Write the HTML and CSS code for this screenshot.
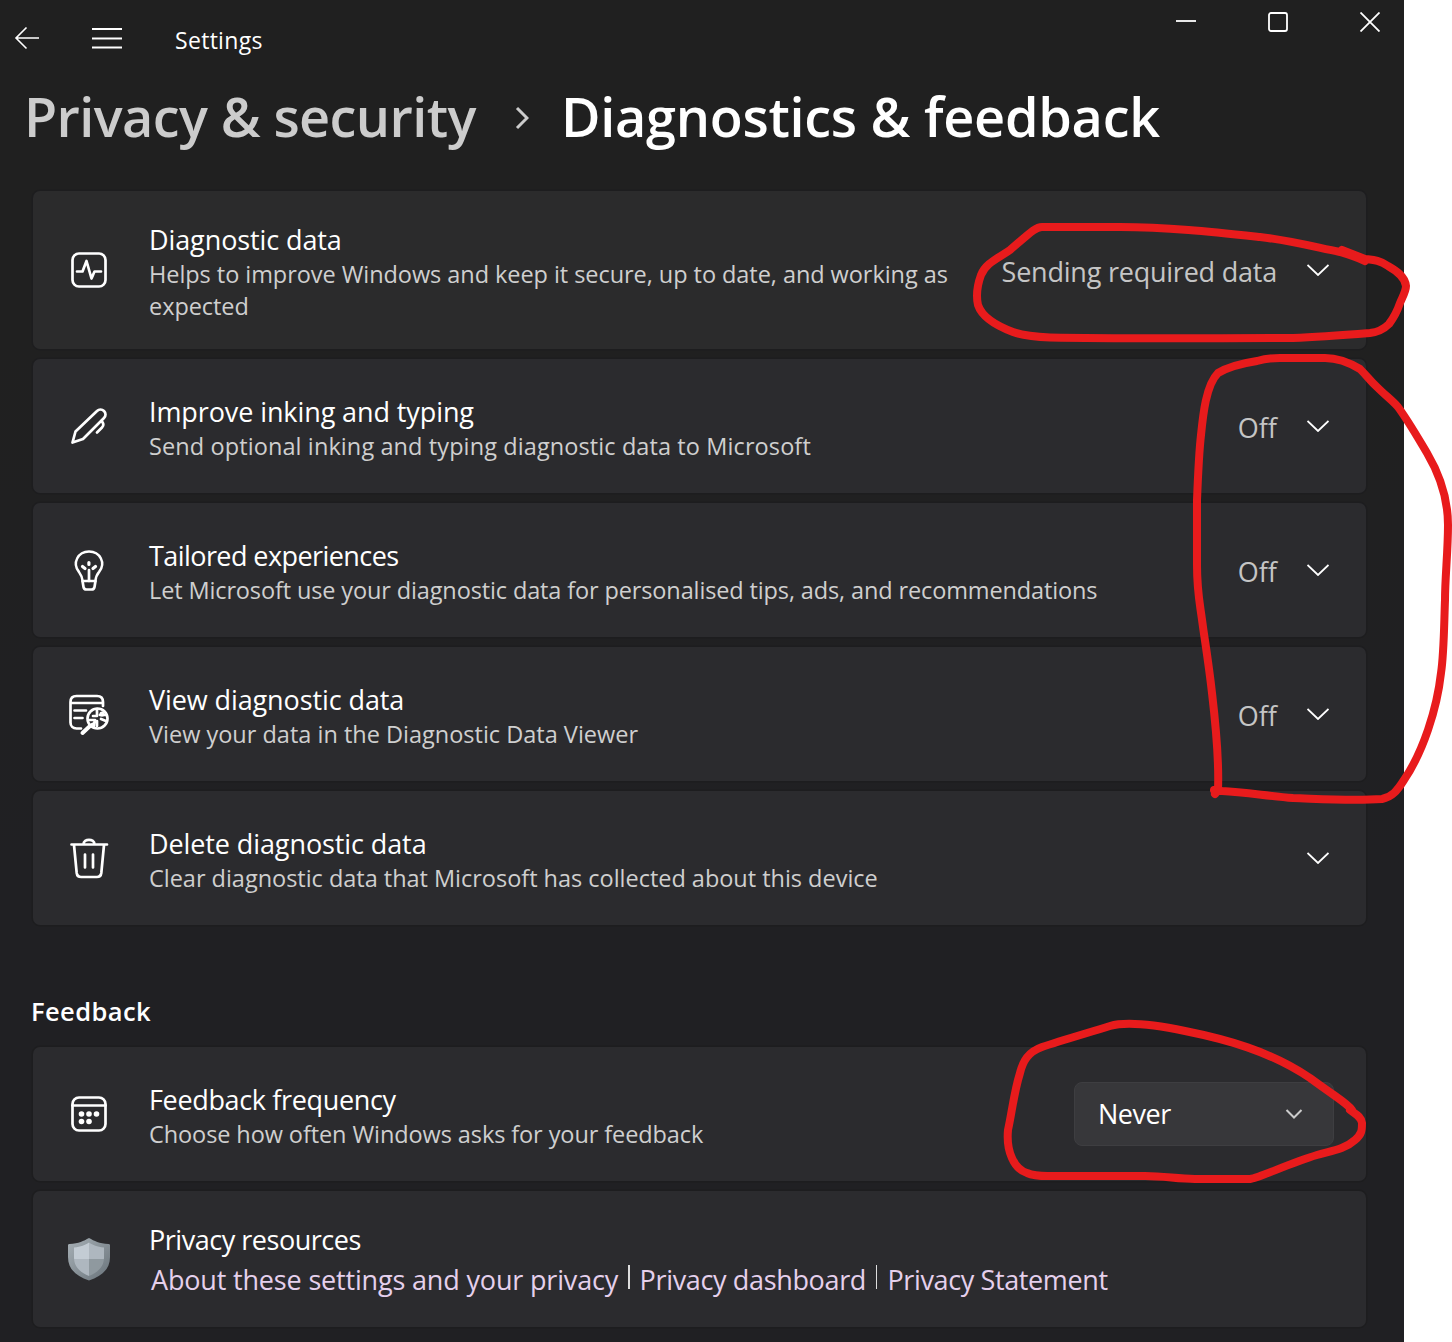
FILE: index.html
```html
<!DOCTYPE html>
<html lang="en">
<head>
<meta charset="utf-8">
<title>Settings</title>
<link rel="stylesheet" href="styles.css">
</head>
<body>
<div class="window">
  <header class="titlebar">
    <div class="nav">
      <svg class="back" width="26" height="24" viewBox="0 0 26 24"><path d="M25 12H2M12.500 1.500L2 12l10.500 10.500"/></svg>
      <svg class="menu" width="30" height="22" viewBox="0 0 30 22"><path d="M0 2h30M0 11.500h30M0 20.500h30"/></svg>
      <span class="app-name">Settings</span>
    </div>
    <div class="controls">
      <svg width="20" height="20" viewBox="0 0 20 20"><path d="M0 9h20"/></svg>
      <svg width="20" height="20" viewBox="0 0 20 20"><rect x="1" y="1" width="18" height="18" rx="2"/></svg>
      <svg width="20" height="20" viewBox="0 0 20 20"><path d="M.5.500l19 19M19.500.500l-19 19"/></svg>
    </div>
  </header>
  <h1 class="crumbs">
    <span class="parent">Privacy &amp; security</span>
    <svg width="14" height="24" viewBox="0 0 14 24"><path d="M2 2l10 10L2 22"/></svg>
    <span class="current">Diagnostics &amp; feedback</span>
  </h1>
  <main>
    <section class="cards">
      <article class="card tall">
        <svg class="icon" width="44" height="44" viewBox="0 0 44 44"><rect x="5.500" y="5.500" width="33" height="33" rx="6.500"/><path d="M10 23.500h5.500l4-10.500 5 17.500 3-7H34"/></svg>
        <div class="text"><h2>Diagnostic data</h2><p class="s1">Helps to improve Windows and keep it secure, up to date, and working as expected</p></div>
        <span class="value sending">Sending required data</span>
        <svg class="chevron" width="22" height="12" viewBox="0 0 22 12"><path d="M.5 1L11 11 21.500 1"/></svg>
      </article>
      <article class="card">
        <svg class="icon" width="44" height="44" viewBox="0 0 44 44"><path d="M5.500 38.500l3-11L30 7c2-2 5-2 7 0s2 5 0 7L16 35z"/><path d="M34.500 17c2.500 2.500 2.500 4.500.5 6.500l-5 5"/></svg>
        <div class="text"><h2 class="t2">Improve inking and typing</h2><p class="s2">Send optional inking and typing diagnostic data to Microsoft</p></div>
        <span class="value">Off</span>
        <svg class="chevron" width="22" height="12" viewBox="0 0 22 12"><path d="M.5 1L11 11 21.500 1"/></svg>
      </article>
      <article class="card">
        <svg class="icon" width="44" height="44" viewBox="0 0 44 44"><path d="M15 33c-.5-4-2-6.500-4-9-8-9-1-20.500 11-20.500S41 15 33 24c-2.500 2.500-3.500 5-4 9z" transform="translate(2 0) scale(.91 1)"/><path d="M15.500 33l1 6c.3 1.800 1 2.500 3 2.500h5c2 0 2.700-.7 3-2.500l1-6M22 22v11"/><path d="M21.900 14.500v2M15.500 18.500l2.500 2M28.500 18.500l-2.500 2" stroke-width="3.200"/></svg>
        <div class="text"><h2 class="t3">Tailored experiences</h2><p class="s3">Let Microsoft use your diagnostic data for personalised tips, ads, and recommendations</p></div>
        <span class="value">Off</span>
        <svg class="chevron" width="22" height="12" viewBox="0 0 22 12"><path d="M.5 1L11 11 21.500 1"/></svg>
      </article>
      <article class="card">
        <svg class="icon" width="44" height="44" viewBox="0 0 44 44"><path d="M14 36.500H9.500c-3.500 0-6-2.500-6-6V10c0-4 2-6 6-6H30c4 0 6 2 6 6v4M3.500 11H36M7.500 18.500H19M7.500 26h8"/><circle cx="30.500" cy="26.500" r="10"/><path d="M23 34L15.500 41" stroke-width="4"/><path d="M30 17v7h-4M22 28h6l-1 4M38 23h-5M34 27l5 2M30 29v5"/><circle cx="35" cy="22" r="1.200"/><circle cx="26" cy="33" r="1.200"/></svg>
        <div class="text"><h2 class="t4">View diagnostic data</h2><p class="s4">View your data in the Diagnostic Data Viewer</p></div>
        <span class="value">Off</span>
        <svg class="chevron" width="22" height="12" viewBox="0 0 22 12"><path d="M.5 1L11 11 21.500 1"/></svg>
      </article>
      <article class="card">
        <svg class="icon" width="44" height="44" viewBox="0 0 44 44"><path d="M4.500 8.500h35.500M16.500 8.300c0-6 11-6 11 0M7 9l2.700 28c.4 3 1.500 4 4.500 4h15.600c3 0 4.100-1 4.500-4L37 9M18 18.500v13M26 18.500v13"/></svg>
        <div class="text"><h2 class="t5">Delete diagnostic data</h2><p class="s5">Clear diagnostic data that Microsoft has collected about this device</p></div>
        <svg class="chevron" width="22" height="12" viewBox="0 0 22 12"><path d="M.5 1L11 11 21.500 1"/></svg>
      </article>
    </section>
    <h3 class="group">Feedback</h3>
    <section class="cards">
      <article class="card feedback">
        <svg class="icon" width="44" height="44" viewBox="0 0 44 44"><rect x="5.500" y="5.500" width="33" height="33" rx="6.500"/><path d="M5.500 13.500h33"/><g class="dots"><circle cx="14.500" cy="22" r="2.800"/><circle cx="22" cy="22" r="2.800"/><circle cx="29.500" cy="22" r="2.800"/><circle cx="14.500" cy="29.500" r="2.800"/><circle cx="22" cy="29.500" r="2.800"/></g></svg>
        <div class="text"><h2 class="t6">Feedback frequency</h2><p class="s6">Choose how often Windows asks for your feedback</p></div>
        <button class="select"><span>Never</span><svg width="18" height="12" viewBox="0 0 18 12"><path d="M1.500 2L9 9.500 16.500 2"/></svg></button>
      </article>
      <article class="card privacy">
        <svg class="icon shield" width="44" height="44" viewBox="0 0 44 44">
          <defs>
            <linearGradient id="rim" x1="0" y1="0" x2="1" y2="1"><stop offset="0" stop-color="#a7b0b6"/><stop offset="1" stop-color="#69737a"/></linearGradient>
            <clipPath id="inner"><path d="M22 5.500c4 2.500 8 4.500 15 5v10c0 9-5.500 14.500-15 18.500C12.500 35 7 29.500 7 20.500v-10c7-.5 11-2.500 15-5z"/></clipPath>
          </defs>
          <path fill="url(#rim)" d="M22 1c5.500 3 10 5.500 19.500 6 1 0 1.500.5 1.500 1.500V20c0 12-8 19-21 23.500C9 39 1 32 1 20V8.500C1 7.500 1.500 7 2.500 7 12 6.500 16.500 4 22 1z"/>
          <g clip-path="url(#inner)"><path fill="#c3ccd4" d="M5 3h17v19H5z"/><path fill="#aeb7bf" d="M22 3h17v19H22zM5 22h17v18H5z"/><path fill="#8f999f" d="M22 22h17v18H22z"/></g>
        </svg>
        <div class="text"><h2 class="t7">Privacy resources</h2><div class="links"><a class="l1">About these settings and your privacy</a><i></i><a class="l2">Privacy dashboard</a><i></i><a class="l3">Privacy Statement</a></div></div>
      </article>
    </section>
  </main>
</div>
<svg class="ink" width="1452" height="1342" viewBox="0 0 1452 1342">
  <path d="M1365 261C1356 257 1350 255 1340 252C1315 247 1288 240 1260 237C1213 232 1167 227 1120 227H1042C1036 227 1032 231 1010 250C997 259 986 263 981 275C977 286 976 296 978 305C982 317 997 326 1013 332C1024 336 1037 337 1050 337.500C1130 339 1210 338 1293 338C1320 337 1345 335 1370 333C1378 332 1384 329 1389 324C1395 316 1398 309 1400 303C1403 296 1406 291 1406 286C1405 276 1395 270 1388 266C1379 260 1373 260 1365 259L1342 250"/>
  <path d="M1215 794L1218 790C1219 765 1216 727 1212 693C1209 666 1206 648 1203 627C1199 597 1197 592 1197 565V500C1198 475 1199 452 1201 435C1203 415 1206 385 1218 373C1228 367 1244 363 1257 361C1264 359 1273 358 1280 358H1325C1337 358 1350 363 1360 369C1368 377 1370 381 1377 387C1386 396 1393 401 1398 407C1409 422 1418 438 1427 453C1440 475 1448 499 1448 525C1448 551 1445 578 1445 600C1444 626 1444 653 1441 673C1437 709 1423 752 1404 780C1397 791 1392 797 1382 799C1352 801 1322 799 1293 798C1268 796 1244 792 1222 791L1214 790"/>
  <path d="M1352 1110C1347 1103 1340 1100 1310 1078C1270 1051 1225 1039 1185 1031C1161 1026 1127 1021 1110 1026C1084 1034 1060 1041 1042 1047C1028 1052 1023 1061 1020 1073C1014 1092 1012 1112 1008 1130C1006 1151 1014 1169 1027 1173C1036 1177 1045 1176 1055 1176H1145C1165 1176 1177 1179 1195 1179H1250C1259 1178 1290 1163 1317 1155C1330 1151 1344 1150 1355 1140C1362 1134 1362 1130 1362 1123C1361 1116 1355 1114 1350 1110"/>
</svg>
</body>
</html>
```
FILE: styles.css
```css
* { box-sizing: border-box; }

body {
  margin: 0;
  position: relative;
  width: 1452px;
  height: 1342px;
  overflow: hidden;
  background: #fff;
  color: #fff;
  font-family: "Open Sans", "Noto Sans", sans-serif;
}

svg { display: block; flex: none; fill: none; stroke: #fff; stroke-width: 2; }
h1, h2, h3, p { margin: 0; font-weight: 400; }

.window {
  width: 1404px;
  height: 1342px;
  background: linear-gradient(180deg, #202020 0%, #202020 25%, #202023 65%, #202023 100%);
}

.titlebar { display: flex; justify-content: space-between; height: 80px; }
.nav { display: flex; align-items: center; height: 76px; padding-left: 14px; }
.back { stroke-width: 1.6; }
.menu { margin-left: 52px; }
.app-name { margin-left: 53px; font-size: 23px; line-height: 32px; padding-top: 3px; letter-spacing: .3px; }
.controls { display: flex; gap: 72px; padding: 12px 24px 0 0; }
.controls svg { stroke-width: 1.8; }

.crumbs {
  display: flex;
  height: 111px;
  padding-left: 24px;
  font-size: 54px;
  line-height: 73px;
  font-weight: 600;
  white-space: nowrap;
}
.crumbs svg { margin: 26px 32px 0 38px; stroke: #ccc; stroke-width: 3; }
.parent { width: 453px; color: #ccc; letter-spacing: -.6px; }
.current { letter-spacing: -.28px; }

.cards { display: flex; flex-direction: column; gap: 10px; padding: 0 38px 0 33px; }
.card {
  display: flex;
  align-items: center;
  height: 134px;
  padding: 0 37px 0 34px;
  border-radius: 7px;
  background: #2b2b2e;
  box-shadow: 0 0 0 1.500px #1d1d1f;
}
.card.tall { height: 158px; background: #2b2b2c; }
.text { flex: 1; min-width: 0; margin-left: 38px; padding-top: 4px; white-space: nowrap; }
.card h2 { font-size: 27px; line-height: 36px; letter-spacing: -.1px; }
.card p { font-size: 23.500px; line-height: 32px; color: #cfcfcf; }
.tall p { width: 815px; white-space: normal; }

/* Per-string tracking */
.card .t3 { letter-spacing: -.57px; }
.card .t6 { letter-spacing: -.35px; }
.card .t7 { letter-spacing: -.47px; }
.s1 { letter-spacing: -.055px; }
.s2 { letter-spacing: .1px; }
.s3 { letter-spacing: -.127px; }
.s5 { letter-spacing: -.02px; }
.s6 { letter-spacing: -.09px; }
.l1 { letter-spacing: -.17px; }
.l2 { letter-spacing: -.35px; }
.l3 { letter-spacing: -.38px; }

.value { font-size: 27px; line-height: 36px; color: #c5c5c5; margin-right: 30px; padding-top: 4px; }
.sending { letter-spacing: -.22px; }
.chevron { stroke-width: 1.8; }
.icon { stroke-width: 2.700; stroke-linecap: round; stroke-linejoin: round; }
.dots { fill: #fff; stroke: none; }
.shield { stroke: none; }

.group { height: 122px; padding: 68px 0 0 31px; font-size: 25.500px; line-height: 36px; font-weight: 600; letter-spacing: .4px; }

.feedback { padding-right: 32px; }
.select {
  display: flex;
  align-items: center;
  justify-content: space-between;
  width: 260px;
  height: 64px;
  padding: 0 30px 0 23px;
  border: 1.500px solid #3e3e41;
  border-radius: 8px;
  background: #37373a;
  color: #fff;
  font: 27px/36px "Open Sans", sans-serif;
  letter-spacing: -.5px;
}
.select svg { stroke: #ccc; }

.privacy { height: 136px; }
.links { display: flex; align-items: center; height: 42px; padding: 2px 0 0 2px; font-size: 27px; line-height: 42px; color: #e5d0ec; }
.links i { width: 1.500px; height: 24px; margin: -6px 10px 0; background: #ddd; }

.ink { position: absolute; left: 0; top: 0; stroke: #e81b1c; stroke-width: 8; stroke-linecap: round; stroke-linejoin: round; pointer-events: none; }
```
